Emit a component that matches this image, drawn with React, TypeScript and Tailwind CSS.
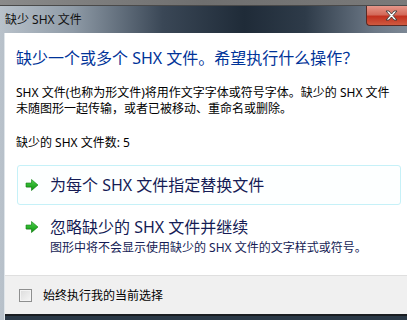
import React from 'react'

const FONT = "font-['Noto_Sans','Noto_Sans_CJK_SC',sans-serif]"

// Green "go" arrow used by the command links
function GoArrow() {
  return (
    <svg width="14" height="14" viewBox="0 0 14 14" className="shrink-0">
      <defs>
        <linearGradient id="ga" x1="0" y1="0" x2="0" y2="1">
          <stop offset="0" stopColor="#4fd04f" />
          <stop offset="1" stopColor="#0c950c" />
        </linearGradient>
      </defs>
      <path d="M2 8.5h5v3l5-4.5-5-4.5v3H2z" fill="#8a8a8a" opacity="0.5" transform="translate(-0.5 1.2)" />
      <path d="M1 5h5.5v-3.5l6.5 5.5-6.5 5.5v-3.5h-5.5z" fill="url(#ga)" stroke="#0e7f0e" strokeWidth="0.6" strokeLinejoin="round" />
    </svg>
  )
}

function CommandLink({ title, note, active }: { title: string; note?: string; active?: boolean }) {
  return (
    <div
      className={
        'ml-[12px] mr-[6px] rounded-[3px] border px-[7px] ' +
        (active ? 'border-[#c6f1f8] bg-[#fdffff]' : 'border-transparent')
      }
    >
      <div className="flex items-center gap-[11px] h-[38px]">
        <GoArrow />
        <span className="text-[16px] leading-[20px] text-[#151c55]">{title}</span>
      </div>
      {note && (
        <div className="-mt-[6px] pl-[25px] text-[12px] leading-[16px] text-[#151c55]">{note}</div>
      )}
    </div>
  )
}

export default function App() {
  return (
    <div
      className={
        FONT +
        ' w-[407px] h-[320px] overflow-hidden flex flex-col bg-[linear-gradient(90deg,#b9c2cb_0%,#8e9aa6_18%,#3a4756_40%,#1f2b38_60%,#2e3b49_75%,#6c7886_92%,#7c8794_100%)]'
      }
    >
      {/* Desktop strip above the window */}
      <div className="h-[6px] shrink-0 bg-[linear-gradient(90deg,#8a8a8a,#6f6f6f_50%,#7a7a7a)] border-b border-[#4a4a4a]" />

      {/* Title bar */}
      <div className="h-[27px] shrink-0 flex items-start relative">
        <span className="pl-[5px] pt-[6px] text-[12px] leading-[16px] text-[#111]">缺少 SHX 文件</span>
        <div className="absolute right-0 top-0 w-[41px] h-[20px] rounded-bl-[4px] border border-t-0 border-r-0 border-[#5a2a24] bg-[linear-gradient(180deg,#e6978a_0%,#d36a5a_45%,#c2311f_55%,#cf5a40_100%)] flex items-center pl-[18px]">
          <svg width="13" height="11" viewBox="0 0 13 11">
            <path
              d="M1 1h3l2.5 3 2.5-3h3l-4 4.5 4 4.5h-3l-2.5-3-2.5 3h-3l4-4.5z"
              fill="#fff"
              stroke="#3a3a3a"
              strokeWidth="0.9"
              strokeLinejoin="round"
            />
          </svg>
        </div>
      </div>

      {/* Client area */}
      <div className="flex-1 ml-[4px] flex flex-col border-l border-[#dfe5ea]">
        <div className="h-[242px] shrink-0 bg-white flex flex-col">
          <div className="pt-[15px] pl-[11px] text-[16px] leading-[20px] text-[#003399]">
            缺少一个或多个 SHX 文件。希望执行什么操作？
          </div>
          <div className="mt-[17px] pl-[11px] pr-[6px] text-[12px] leading-[16px] text-black">
            SHX 文件(也称为形文件)将用作文字字体或符号字体。缺少的 SHX 文件
            <br />
            未随图形一起传输，或者已被移动、重命名或删除。
          </div>
          <div className="mt-[18px] pl-[11px] text-[12px] leading-[15px] text-black">缺少的 SHX 文件数: 5</div>
          <div className="mt-[15px] flex flex-col gap-[2px]">
            <CommandLink title="为每个 SHX 文件指定替换文件" active />
            <CommandLink title="忽略缺少的 SHX 文件并继续" note="图形中将不会显示使用缺少的 SHX 文件的文字样式或符号。" />
          </div>
        </div>

        {/* Footer */}
        <div className="h-[39px] shrink-0 bg-[#f0f0f0] border-t border-[#dfdfdf] flex items-center pl-[14px] gap-[11px]">
          <div className="w-[13px] h-[13px] border border-[#8e8f8f] bg-[linear-gradient(135deg,#dcdcdc,#f6f6f6)] shadow-[inset_0_0_0_1px_#f4f4f4]" />
          <span className="text-[12px] leading-[15px] text-black">始终执行我的当前选择</span>
        </div>

        {/* Bottom frame */}
        <div className="flex-1 border-t-2 border-[#1a1d21] bg-[#2b3947]" />
      </div>
    </div>
  )
}
